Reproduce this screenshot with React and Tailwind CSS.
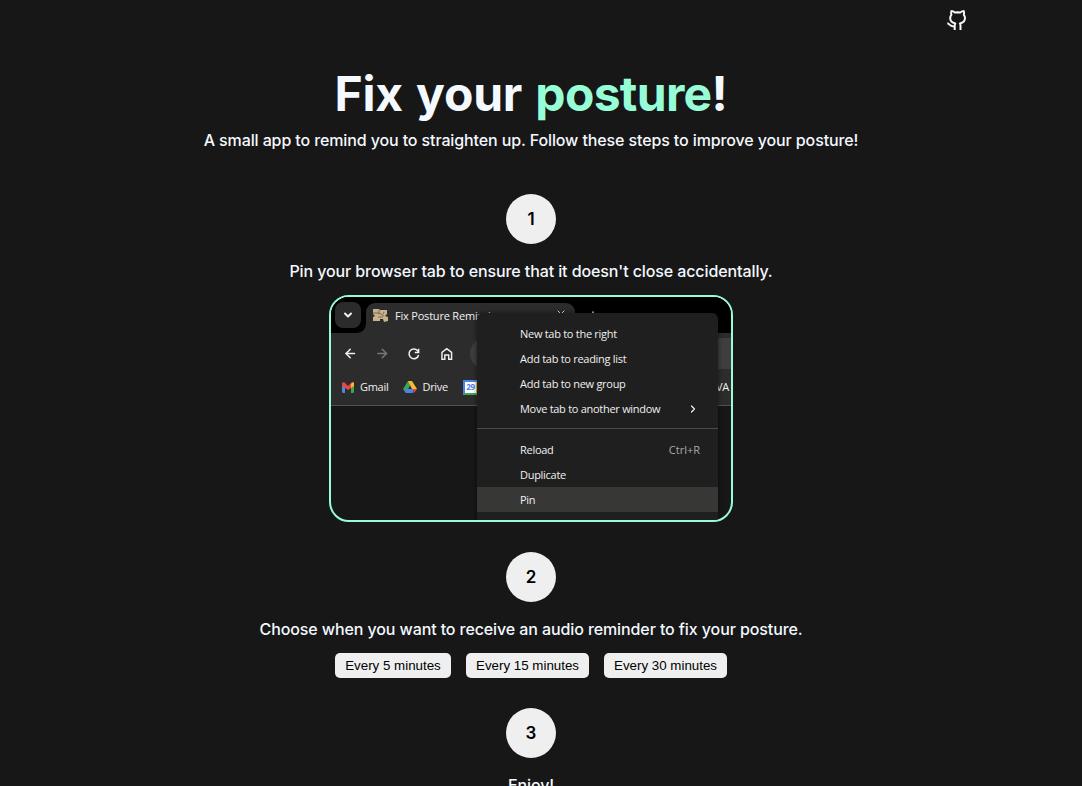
import { ArrowLeft, ArrowRight, ChevronDown, ChevronRight, X, Plus } from "lucide-react";

function GithubMark() {
  return (
    <svg viewBox="0 0 24 24" className="size-6" fill="none" stroke="#f7f7f7" strokeWidth="2" strokeLinejoin="round">
      <path d="M9.700 22v-4.500c0-.8.200-1.400.6-2-2.900-.5-5.100-1.900-5.100-5.400 0-1.300.5-2.400 1.200-3.200-.4-1.300-.4-2.600 0-3.800 1.500 0 2.700.8 3.500 1.500 1.800-.3 3.600-.3 5.400 0 .8-.7 2-1.500 3.500-1.500.4 1.200.4 2.500 0 3.800.7.8 1.200 1.900 1.200 3.200 0 3.500-2.200 4.900-5.100 5.400.4.600.6 1.200.6 2V22" />
      <path d="M2.300 15.200c2.200 0 2 3.900 7.400 3.300" />
    </svg>
  );
}

function Favicon() {
  return (
    <svg viewBox="0 0 15 14" className="h-[14px] w-[15px] shrink-0">
      <path fill="#c9b18c" d="M0 1h6l1 1h7v4l-2 2 3 1v4l-4 1-1-3H7v2H0V9l2-1-2-2z" />
      <path stroke="#5b4e3d" fill="none" strokeWidth=".7" d="M0 5h5l3 1 3 2M6 2v4M5 9h5M10 6l1-2" />
    </svg>
  );
}

function Step({ number, children }) {
  return (
    <>
      <div className="flex size-[50px] items-center justify-center rounded-full bg-[#efefef] pt-[2px] text-[17px] font-semibold text-black">{number}</div>
      <p className="mt-[15px] h-6 whitespace-nowrap text-base font-medium leading-6 tracking-[-0.1px]">{children}</p>
    </>
  );
}

function MenuItem({ label, children, active }) {
  return (
    <div className={`flex h-[25px] items-center justify-between pl-[43px] pr-[18px] ${active ? "bg-[#373735]" : ""}`}>
      <span>{label}</span>
      {children}
    </div>
  );
}

function BrowserPreview() {
  return (
    <div className="relative mt-3 h-[227px] w-[404px] overflow-hidden rounded-[20px] border-2 border-[#97fdd7] bg-[#171717] font-['Open_Sans','Noto_Sans',sans-serif] text-[11px] leading-[14px] tracking-[-0.28px] text-[#f0f0f0]">
      <div className="flex h-9 bg-[#2c2c2c]">
        <div className="flex h-9 w-[35px] shrink-0 items-start rounded-br-[9px] bg-black pl-1 pt-[5px]">
          <div className="flex size-[26px] items-center justify-center rounded-lg bg-[#2b2b2b]"><ChevronDown size={12} strokeWidth={4} /></div>
        </div>
        <div className="h-9 w-[209px] shrink-0 bg-black">
          <div className="mt-[6px] flex h-[30px] items-start rounded-t-[9px] bg-[#2c2c2c] pl-[7px] pt-[5px]">
            <Favicon />
            <span className="ml-[7px] mt-px whitespace-nowrap tracking-[-0.2px]">Fix Posture Reminder</span>
            <X size={12} className="ml-auto mr-2" />
          </div>
        </div>
        <div className="h-9 grow bg-black pl-[11px] pt-[12px]"><Plus size={14} strokeWidth={2.500} /></div>
      </div>
      <div className="h-[73px] border-b border-[#515151] bg-[#2c2c2c]">
        <div className="flex h-[41px] items-center pl-3">
          <ArrowLeft size={15} strokeWidth={2.5} />
          <ArrowRight size={15} strokeWidth={2.5} className="ml-[17px] text-[#777]" />
          <svg viewBox="0 0 14 14" className="ml-[18px] size-[14px]" fill="none" stroke="currentColor" strokeWidth="1.600"><path d="M11.300 4A5 5 0 1 0 12 8M12 1.500v4H8" /></svg>
          <svg viewBox="0 0 14 14" className="ml-[19px] size-[14px]" fill="none" stroke="currentColor" strokeWidth="1.500"><path d="M2 12.500V5.300L7 1.500l5 3.800v7.200H9V8H5v4.500z" /></svg>
          <div className="ml-[17px] h-[31px] w-[270px] rounded-l-full bg-[#3e3e3e]" />
        </div>
        <div className="flex h-[26px] items-center pl-[10px]">
          <svg viewBox="0 0 14 11" className="h-[11px] w-[14px]">
            <path fill="#5084ed" d="M1 2h3v9H2L1 10z" /><path fill="#3da553" d="M10 2h3v8l-1 1h-2z" /><path fill="#e24a3e" d="M1 1l2-1 4 4 4-4 2 1v3L7 8 1 4z" /><path fill="#f5bb2c" d="M10 2l2-2 1 1v3l-3 2z" />
          </svg>
          <span className="ml-[5px]">Gmail</span>
          <svg viewBox="0 0 14 12" className="ml-[15px] h-3 w-[14px]">
            <path fill="#37a653" d="M5 0h2l1 3-5 9L0 8z" /><path fill="#f8bd2d" d="M5 0h4l5 8H9z" /><path fill="#4c80ed" d="M3 8h8l-1 4H3L1 9z" /><path fill="#de4d3c" d="M10 8h4l-3 4z" />
          </svg>
          <span className="ml-[5px]">Drive</span>
          <div className="ml-[15px] flex size-[15px] items-center justify-center border-2 border-[#4b80e9] border-b-[#39a557] border-r-[#f8bd2d] bg-white text-[8px] font-bold text-[#4b80e9]">29</div>
          <span className="ml-auto mr-[2px]">VA</span>
        </div>
      </div>
      <div className="absolute left-[146px] top-4 h-[210px] w-[241px] rounded-t-md bg-[#1f1f1f] pt-2 shadow-[0_0_5px_#0008]">
        <MenuItem label="New tab to the right" />
        <MenuItem label="Add tab to reading list" />
        <MenuItem label="Add tab to new group" />
        <MenuItem label="Move tab to another window"><ChevronRight size={12} strokeWidth={2.500} className="mr-[1px]" /></MenuItem>
        <div className="mb-2 mt-[7px] h-px bg-[#4b4b4b]" />
        <MenuItem label="Reload"><span className="tracking-normal text-[#aaa]">Ctrl+R</span></MenuItem>
        <MenuItem label="Duplicate" />
        <MenuItem label="Pin" active />
      </div>
    </div>
  );
}

export default function App() {
  return (
    <div className="h-[786px] overflow-hidden bg-[#171717] pr-5 font-['Inter',sans-serif] text-[#f4f9ff]">
      <header className="flex h-10 items-center justify-end pr-[93px]"><a href="#" aria-label="GitHub"><GithubMark /></a></header>
      <main className="flex flex-col items-center">
        <h1 className="mt-6 h-[60px] whitespace-nowrap text-5xl font-bold leading-[60px] tracking-[-0.2px]">Fix <span className="ml-[2px]">your</span> <span className="ml-[2px] tracking-[-0.7px] text-[#97fdd7]">posture</span>!</h1>
        <p className="mb-[42px] mt-1 h-6 whitespace-nowrap text-base font-medium leading-6 tracking-[-0.115px]">A small app to remind you to straighten up. Follow these steps to improve your posture!</p>
        <Step number="1">Pin your browser tab to ensure that it doesn't close accidentally.</Step>
        <BrowserPreview />
        <div className="h-[30px] shrink-0" />
        <Step number="2">Choose when you want to receive an audio reminder to fix your posture.</Step>
        <div className="mb-[30px] mt-3 flex gap-[15px] font-['Liberation_Sans',sans-serif] text-[13.333px] text-black">
          <button className="h-[25px] w-[116px] rounded-[5px] bg-[#efefef]">Every 5 minutes</button>
          <button className="h-[25px] w-[123px] rounded-[5px] bg-[#efefef]">Every 15 minutes</button>
          <button className="h-[25px] w-[123px] rounded-[5px] bg-[#efefef]">Every 30 minutes</button>
        </div>
        <Step number="3">Enjoy!</Step>
      </main>
    </div>
  );
}
